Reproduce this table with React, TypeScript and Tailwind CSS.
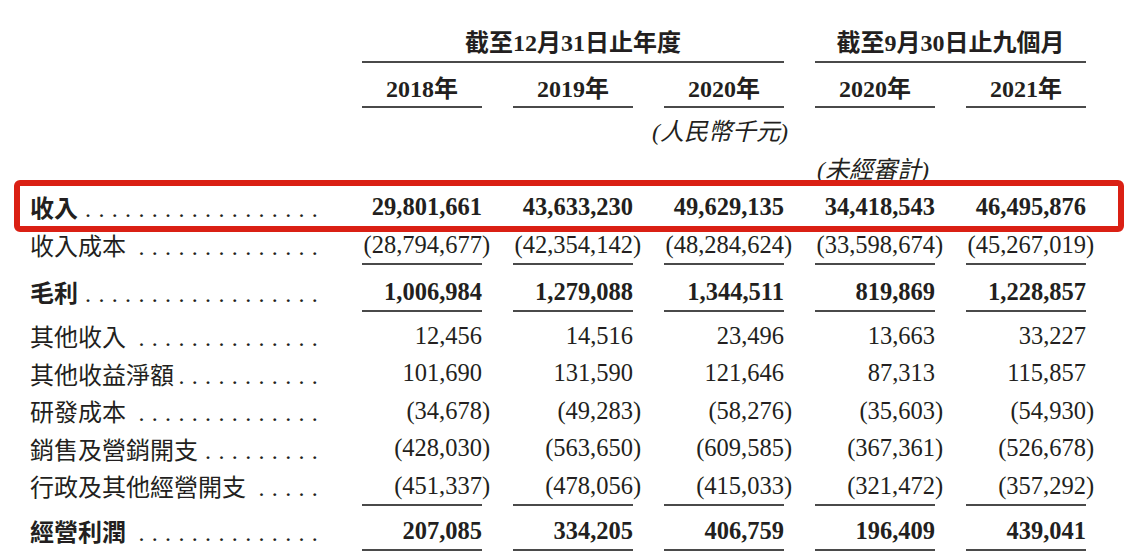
import React from "react";

function dots(label: string) {
  const avail = 288.5 - label.length * 24 - 4;
  const n = Math.max(1, Math.floor((avail + 6.67) / 13.33));
  return Array.from({ length: n }, () => ".").join(" ");
}

function Num({ v, bold }: { v: string; bold?: boolean }) {
  const neg = v.startsWith("(");
  const inner = neg ? v.slice(0, -1) : v;
  return (
    <span
      className={`whitespace-nowrap font-['Liberation_Serif',serif] text-[24.5px] leading-[36px] ${
        bold ? "font-bold" : "font-normal"
      }`}
    >
      {inner}
      {neg && <span className="inline-block w-0">)</span>}
    </span>
  );
}

type RowProps = {
  label: string;
  vals: string[];
  bold?: boolean;
  line?: boolean;
  className?: string;
  h?: string;
};

function Row({ label, vals, bold, line, className = "", h = "h-[38px]" }: RowProps) {
  return (
    <div className={`flex ${h} ${className}`}>
      <div className="flex w-[362px] items-baseline pl-[30px] pr-[43.5px] leading-[36px]">
        <span
          className={`shrink-0 whitespace-nowrap pr-[4px] font-['Noto_Sans_CJK_TC',sans-serif] text-[24px] ${
            bold ? "font-bold" : "font-normal"
          }`}
        >
          {label}
        </span>
        <span className="ml-auto whitespace-nowrap font-['Liberation_Serif',serif] text-[24px] tracking-[0.67px]">
          {dots(label)}
        </span>
      </div>
      <div className="flex gap-[31px]">
        {vals.map((v, i) => (
          <div
            key={i}
            className={`flex w-[120px] items-center justify-end ${
              line ? "border-b-2 border-[#4a4a4a]" : "pb-[2px]"
            }`}
          >
            <Num v={v} bold={bold} />
          </div>
        ))}
      </div>
    </div>
  );
}

export default function App() {
  return (
    <div className="h-[558px] w-[1132px] overflow-hidden bg-white text-[#231f20]">
      {/* group header */}
      <div className="flex pl-[362px] font-['Liberation_Serif','Noto_Sans_CJK_TC',serif] text-[24px] font-bold leading-[32px]">
        <div className="w-[422px] border-b-2 border-[#4a4a4a] pb-[2px] pt-[27px] text-center">
          截至12月31日止年度
        </div>
        <div className="ml-[31px] w-[271px] border-b-2 border-[#4a4a4a] pb-[2px] pt-[27px] text-center">
          截至9月30日止九個月
        </div>
      </div>
      {/* years */}
      <div className="mt-[10px] flex gap-[31px] pl-[362px] font-['Liberation_Serif','Noto_Sans_CJK_TC',serif] text-[24px] font-bold leading-[32px]">
        {["2018年", "2019年", "2020年", "2020年", "2021年"].map((y, i) => (
          <div key={i} className="w-[120px] border-b-2 border-[#4a4a4a] pb-[1px] text-center">
            {y}
          </div>
        ))}
      </div>
      {/* units */}
      <div className="mt-[8px] flex pl-[660px] font-['Liberation_Serif','Noto_Sans_CJK_TC',serif] text-[24px] italic leading-[32px]">
        <div className="flex w-[120px] justify-center whitespace-nowrap">(人民幣千元)</div>
      </div>
      <div className="mt-[6px] flex pl-[813px] font-['Liberation_Serif','Noto_Sans_CJK_TC',serif] text-[24px] italic leading-[32px]">
        <div className="flex w-[120px] justify-center whitespace-nowrap">(未經審計)</div>
      </div>

      {/* highlighted revenue row */}
      <div className="relative mt-[3px]">
        <Row
          label="收入"
          bold
          vals={["29,801,661", "43,633,230", "49,629,135", "34,418,543", "46,495,876"]}
        />
        <div className="pointer-events-none absolute left-[14px] top-[-9px] h-[52px] w-[1110px] rounded-[6px] border-[6px] border-[#da2014]" />
      </div>
      <Row
        label="收入成本"
        line
        vals={["(28,794,677)", "(42,354,142)", "(48,284,624)", "(33,598,674)", "(45,267,019)"]}
      />
      <Row
        label="毛利"
        bold
        line
        className="mt-[9px]"
        vals={["1,006,984", "1,279,088", "1,344,511", "819,869", "1,228,857"]}
      />
      <Row
        label="其他收入"
        className="mt-[6px]"
        h="h-[37.5px]"
        vals={["12,456", "14,516", "23,496", "13,663", "33,227"]}
      />
      <Row
        label="其他收益淨額"
        h="h-[37.5px]"
        vals={["101,690", "131,590", "121,646", "87,313", "115,857"]}
      />
      <Row
        label="研發成本"
        h="h-[37.5px]"
        vals={["(34,678)", "(49,283)", "(58,276)", "(35,603)", "(54,930)"]}
      />
      <Row
        label="銷售及營銷開支"
        h="h-[37.5px]"
        vals={["(428,030)", "(563,650)", "(609,585)", "(367,361)", "(526,678)"]}
      />
      <Row
        label="行政及其他經營開支"
        line
        vals={["(451,337)", "(478,056)", "(415,033)", "(321,472)", "(357,292)"]}
      />
      <Row
        label="經營利潤"
        bold
        line
        className="mt-[7px]"
        vals={["207,085", "334,205", "406,759", "196,409", "439,041"]}
      />
    </div>
  );
}
